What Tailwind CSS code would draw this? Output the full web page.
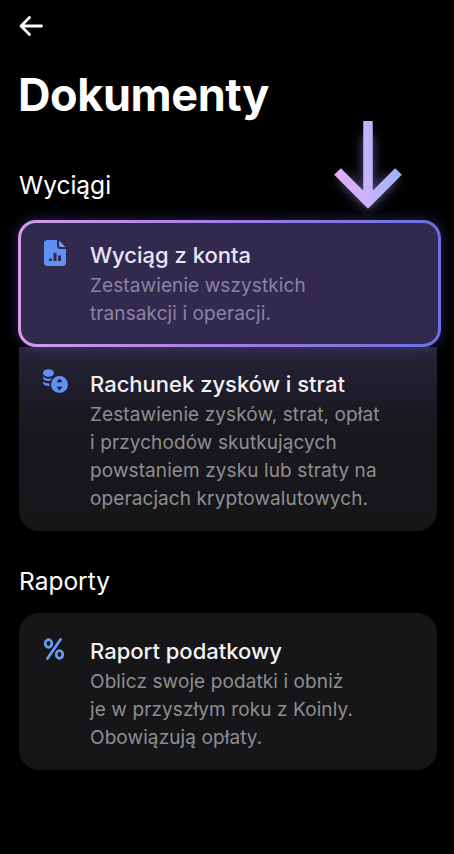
<!DOCTYPE html>
<html lang="pl">
<head>
<meta charset="utf-8">
<script src="https://cdn.jsdelivr.net/npm/@tailwindcss/browser@4"></script>
</head>
<body class="bg-black">
<main class="relative w-[454px] h-[854px] overflow-hidden bg-black text-white font-['Inter',sans-serif] pl-[19px] pr-[17px]">
  <div class="h-[50px] pt-[14px]">
    <svg width="26" height="24" viewBox="0 0 26 24" fill="none" stroke="#fff" stroke-width="2.8" stroke-linecap="round" stroke-linejoin="round"><path d="M22.5 12H2.5M10.5 3.5L2 12l8.500 8.500"/></svg>
  </div>
  <h1 class="mt-[15px] text-[45px] leading-[60px] font-bold tracking-[-0.4px] -ml-px">Dokumenty</h1>
  <h2 class="mt-[45px] text-[24.500px] leading-[30px] font-normal">Wyciągi</h2>

  <section class="mt-[20px]">
    <div class="relative z-10 -ml-px -mr-1 rounded-[18px] p-[3px] bg-linear-to-r from-[#d79be9] via-[#a07ce4] to-[#6b6fe3] shadow-[0_0_14px_rgba(120,100,230,0.35)]">
      <div class="flex h-[121px] rounded-[15px] bg-[#312a4e] pl-[23px] pt-[17px]">
        <svg class="shrink-0" width="22" height="26" viewBox="0 0 22 26"><path fill="#5f90f2" d="M3.500 0H13v5.500A3.500 3.500 0 0 0 16.500 9H22v13.500a3.500 3.500 0 0 1-3.500 3.500h-15A3.500 3.500 0 0 1 0 22.500v-19A3.500 3.500 0 0 1 3.500 0z"/><path fill="#6d9af3" d="M15 .5L21.500 7h-5A1.500 1.500 0 0 1 15 5.500z"/><path fill="#2a2a55" d="M5 18.500h3V21H5zM9.500 13h3v8h-3zM14 15.500h3V21h-3z"/></svg>
        <div class="ml-[24px]">
          <p class="text-[22px] leading-[30px] font-medium text-[#e9e5f7]">Wyciąg z konta</p>
          <p class="mt-[2px] text-[19px] tracking-[0.1px] leading-[28px] text-[#8a83a3]">Zestawienie wszystkich<br>transakcji i operacji.</p>
        </div>
      </div>
    </div>

    <div class="flex h-[184px] rounded-b-[20px] bg-linear-to-b from-[#27233a] via-[#19181f] via-40% to-[#161618] pl-[23px] pt-[22px]">
      <svg class="shrink-0" width="26" height="26" viewBox="0 0 26 26"><g fill="#5f90f2"><ellipse cx="6.500" cy="4" rx="5.500" ry="3.800"/><path d="M1 7.500c1.500 1.500 3.500 2.200 5.500 2.200 1.300 0 2.600-.2 3.700-.7-1 .8-1.800 1.800-2.200 3-.5.100-1 .100-1.500.100-2.500 0-5.500-1-5.500-3zM1 12.500c1.300 1.200 3.200 1.900 6.500 2v2.500C4 17 1 15.700 1 14z"/><circle cx="17.500" cy="15.500" r="8.500"/></g><path fill="#1c1b26" d="M17.500 9.500l3 3.800h-6zM17.500 21.500l3-3.800h-6z"/></svg>
      <div class="ml-[22px]">
        <p class="text-[22px] leading-[30px] font-medium text-[#f2f2f4]">Rachunek zysków i strat</p>
        <p class="mt-[2px] text-[19px] tracking-[0.1px] leading-[28px] text-[#8e8e92]">Zestawienie zysków, strat, opłat<br>i przychodów skutkujących<br>powstaniem zysku lub straty na<br>operacjach kryptowalutowych.</p>
      </div>
    </div>
  </section>

  <h2 class="mt-[35px] text-[24.500px] leading-[30px] font-normal">Raporty</h2>

  <section class="mt-[17px] flex h-[157px] rounded-[20px] bg-[#161618] pl-[24px] pt-[23px]">
    <svg class="shrink-0 mt-[2px]" width="22" height="22" viewBox="0 0 22 22" fill="none" stroke="#6a9af0" stroke-width="2.800" stroke-linecap="round"><ellipse cx="5.500" cy="5.500" rx="3.300" ry="3.800"/><ellipse cx="16.500" cy="16.500" rx="3.300" ry="3.800"/><path d="M17.500 1.500L4.500 20.500"/></svg>
    <div class="ml-[25px]">
      <p class="text-[22px] leading-[30px] font-medium text-[#f2f2f4]">Raport podatkowy</p>
      <p class="mt-[2px] text-[19px] tracking-[0.1px] leading-[28px] text-[#8e8e92]">Oblicz swoje podatki i obniż<br>je w przyszłym roku z Koinly.<br>Obowiązują opłaty.</p>
    </div>
  </section>

  <svg class="absolute left-[320px] top-[105px] z-20" width="100" height="125" viewBox="0 0 100 125" fill="none">
    <defs>
      <linearGradient id="a" x1="15" y1="85" x2="82" y2="75" gradientUnits="userSpaceOnUse"><stop offset="0" stop-color="#e3aef2"/><stop offset=".5" stop-color="#c7b4fb"/><stop offset="1" stop-color="#98b2fa"/></linearGradient>
      <filter id="b" x="-40%" y="-20%" width="180%" height="140%"><feGaussianBlur stdDeviation="6"/></filter>
    </defs>
    <path d="M48 30v68M22 72l26 26 26-26" stroke="#9a8cf0" stroke-opacity=".6" stroke-width="9" filter="url(#b)"/>
    <path d="M48 16v81M17.500 66.500L48 97l30.500-30.500" stroke="url(#a)" stroke-width="9.500"/>
  </svg>
</main>
</body>
</html>
